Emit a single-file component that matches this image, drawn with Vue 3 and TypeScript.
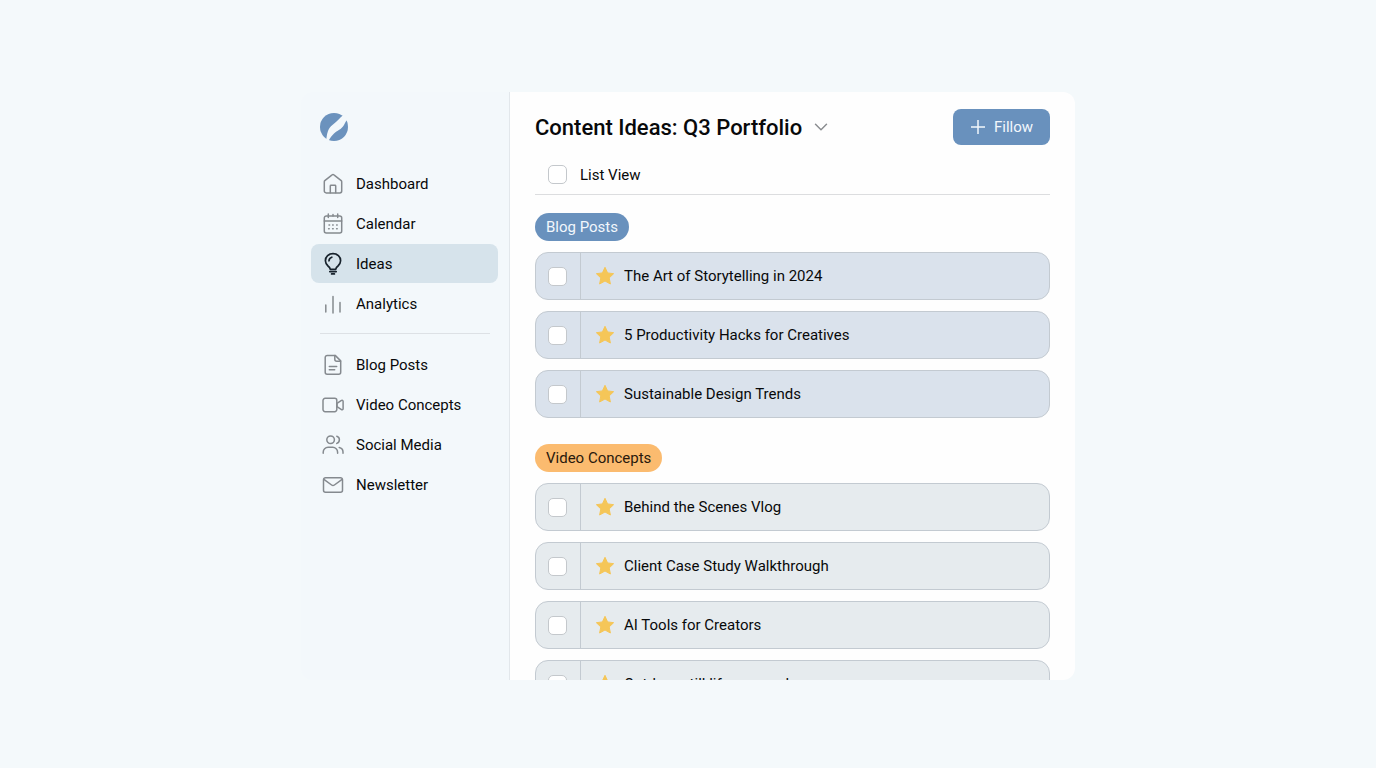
<script setup lang="ts">
import { ref } from 'vue'

interface NavItem {
  label: string
  icon: string
}

interface Idea {
  title: string
  done: boolean
}

interface Group {
  name: string
  tone: string
  ideas: Idea[]
}

const primary: NavItem[] = [
  { label: 'Dashboard', icon: 'home' },
  { label: 'Calendar', icon: 'calendar' },
  { label: 'Ideas', icon: 'bulb' },
  { label: 'Analytics', icon: 'bars' },
]

const secondary: NavItem[] = [
  { label: 'Blog Posts', icon: 'doc' },
  { label: 'Video Concepts', icon: 'video' },
  { label: 'Social Media', icon: 'people' },
  { label: 'Newsletter', icon: 'mail' },
]

const sections = [primary, secondary]

const icons: Record<string, string[]> = {
  home: [
    'M2.8 7.6 10.1 1.8a1.4 1.4 0 0 1 1.8 0l7.300 5.800a1.500 1.500 0 0 1 .5 1.200v9.200a1.900 1.900 0 0 1-1.900 1.900H4.200a1.900 1.900 0 0 1-1.900-1.900V8.800a1.500 1.500 0 0 1 .5-1.200Z',
    'M8.300 19.800v-6.800a.7.7 0 0 1 .7-.7h4a.7.7 0 0 1 .7.7v6.800',
  ],
  calendar: [
    'M4.3 2.900h13.400a2 2 0 0 1 2 2v13a2 2 0 0 1-2 2H4.300a2 2 0 0 1-2-2v-13a2 2 0 0 1 2-2Z',
    'M2.300 7.900h17.400M6.300.9v3.600M15.700.9v3.600M11 1.500v1.400',
    'M10.600 12h.6M14.600 12h.6M7 12h.6M6.600 15.800h.6M10.600 15.800h.6M14.600 15.800h.6',
  ],
  bulb: [
    'M8.300 16.300C8 14.800 7.300 14 6 13A7.200 7.200 0 0 1 3.400 7.800C3.400 3.700 6.700.7 11 .7s7.600 3 7.600 7.100A7.200 7.200 0 0 1 16 13c-1.300 1-2 1.800-2.300 3.300Z',
    'M7 7.800A4 4 0 0 1 9.800 4.200M7.800 18.600h6.400M9.600 20.900h2.800',
  ],
  bars: ['M3.800 12v7M11 3.500v16.500M18 9.500v9.500'],
  doc: [
    'M5.200 1.400h8l5.500 5.500v11.400a2 2 0 0 1-2 2H5.200a2 2 0 0 1-2-2V3.400a2 2 0 0 1 2-2Z',
    'M12.800 1.600v3.700a2 2 0 0 0 2 2h3.700M7.300 12.400h7.400M7.300 15.700h5.400',
  ],
  video: [
    'M3.100 4.300h9.600a2.100 2.100 0 0 1 2.100 2.100v9.200a2.100 2.100 0 0 1-2.100 2.100H3.100A2.100 2.100 0 0 1 1 15.600V6.400a2.100 2.100 0 0 1 2.100-2.100Z',
    'M15 9.300l4.500-2.900a1 1 0 0 1 1.600.8v7.600a1 1 0 0 1-1.600.8L15 12.700Z',
  ],
  people: [
    'M8.600 2a3.800 3.800 0 1 1 0 7.600 3.800 3.800 0 0 1 0-7.600Z',
    'M1.200 19.300v-1.100a4.900 4.900 0 0 1 4.900-4.900h4.600a4.900 4.900 0 0 1 4.900 4.900v1.100',
    'M14.800 2.200a3.800 3.800 0 0 1 0 7.200M17.200 13.500a4.700 4.700 0 0 1 3.800 4.600v1.200',
  ],
  mail: [
    'M3.500 3.700h15a2 2 0 0 1 2 2v10.600a2 2 0 0 1-2 2h-15a2 2 0 0 1-2-2V5.700a2 2 0 0 1 2-2Z',
    'M1.900 5.300l7.700 5.700a2.300 2.300 0 0 0 2.800 0l7.700-5.700',
  ],
}

const active = ref('Ideas')
const listView = ref(false)

const groups = ref<Group[]>([
  {
    name: 'Blog Posts',
    tone: 'blue',
    ideas: [
      { title: 'The Art of Storytelling in 2024', done: false },
      { title: '5 Productivity Hacks for Creatives', done: false },
      { title: 'Sustainable Design Trends', done: false },
    ],
  },
  {
    name: 'Video Concepts',
    tone: 'orange',
    ideas: [
      { title: 'Behind the Scenes Vlog', done: false },
      { title: 'Client Case Study Walkthrough', done: false },
      { title: 'AI Tools for Creators', done: false },
      { title: 'Outdoor still life as a reel', done: false },
    ],
  },
])
</script>

<template>
  <div class="page">
    <div class="window">
      <aside class="sidebar">
        <svg class="logo" viewBox="0 0 28 28" aria-label="Logo" role="img">
          <circle cx="14" cy="14" r="14" />
          <path
            class="quill"
            d="M5.500 29C7 25 6.500 21.500 8 18C10 13 13.500 11.500 16.500 8.500C19.500 5.500 21.500 3.500 24.500 1L29 5C26 7 25.500 9.500 24 12C21.500 16.500 17 17.500 14 20.500C11.500 23 9.500 25.500 8 29Z"
          />
        </svg>
        <nav class="nav">
          <ul v-for="(items, n) in sections" :key="n" class="nav-group">
            <li v-for="item in items" :key="item.label">
              <a
                href="#"
                class="nav-item"
                :class="{ active: active === item.label }"
                @click.prevent="active = item.label"
              >
                <svg class="icon" viewBox="0 0 22 22" aria-hidden="true">
                  <path v-for="d in icons[item.icon]" :key="d" :d="d" />
                </svg>
                <span>{{ item.label }}</span>
              </a>
            </li>
          </ul>
        </nav>
      </aside>

      <main class="main">
        <header class="header">
          <h1>Content Ideas: Q3 Portfolio</h1>
          <button class="chevron" type="button" aria-label="Switch board">
            <svg viewBox="0 0 14 14" aria-hidden="true"><path d="M1.500 4.300 7 9.800l5.500-5.500" /></svg>
          </button>
          <button class="add" type="button">
            <svg viewBox="0 0 14 14" aria-hidden="true"><path d="M7 0v14M0 7h14" /></svg>
            <span>Fillow</span>
          </button>
        </header>

        <label class="view-toggle">
          <input v-model="listView" type="checkbox" />
          <span>List View</span>
        </label>

        <section v-for="group in groups" :key="group.name" class="group" :class="group.tone">
          <h2>{{ group.name }}</h2>
          <ul class="ideas">
            <li v-for="idea in group.ideas" :key="idea.title">
              <label class="idea">
                <span class="check"><input v-model="idea.done" type="checkbox" /></span>
                <svg class="star" viewBox="0 0 20 20" aria-hidden="true">
                  <path
                    d="M10 1.300 12.600 6.900 18.600 7.700 14.200 11.900 15.400 18 10 15 4.600 18 5.800 11.900 1.400 7.700 7.400 6.900Z"
                  />
                </svg>
                <span>{{ idea.title }}</span>
              </label>
            </li>
          </ul>
        </section>
      </main>
    </div>
  </div>
</template>

<style>
body {
  margin: 0;
  background: #f4f9fb;
}
</style>

<style scoped>
.page {
  box-sizing: border-box;
  height: 100vh;
  padding: 92px 301px 88px;
  background: #f4f9fb;
  color: #08090a;
  font: 15px/20px Roboto, "Liberation Sans", sans-serif;
}

.window {
  display: flex;
  height: 100%;
  overflow: hidden;
  border-radius: 12px;
}

ul {
  margin: 0;
  padding: 0;
  list-style: none;
}

.sidebar {
  box-sizing: border-box;
  flex: 0 0 209px;
  padding: 21px 11px 0 10px;
  border-right: 1px solid #e2e7eb;
  background: #f3f8fb;
}

.logo {
  display: block;
  width: 28px;
  height: 28px;
  margin: 0 0 23px 9px;
}

.logo circle {
  fill: #6b92bd;
}

.logo .quill {
  fill: #f3f8fb;
}

.nav-group {
  display: grid;
  gap: 1px;
}

.nav-group + .nav-group {
  padding-top: 10px;
}

.nav-group + .nav-group::before {
  content: "";
  height: 1px;
  margin: 0 8px 10px 9px;
  background: #dde1e5;
}

.nav-item {
  display: flex;
  align-items: center;
  gap: 12px;
  height: 39px;
  padding-left: 11px;
  border-radius: 8px;
  color: inherit;
  text-decoration: none;
}

.nav-item.active {
  background: #d6e3eb;
}

.icon {
  width: 22px;
  height: 22px;
  overflow: visible;
  fill: none;
  stroke: #858a8f;
  stroke-width: 1.5;
  stroke-linecap: round;
  stroke-linejoin: round;
}

.active .icon {
  stroke: #17222c;
  stroke-width: 1.7;
}

.main {
  flex: 1;
  min-width: 0;
  overflow: hidden;
  padding: 17px 25px 0;
  background: #fefefe;
}

.header {
  display: flex;
  align-items: center;
}

h1 {
  margin: 0;
  font-size: 22px;
  font-weight: 500;
  line-height: 38px;
  height: 36px;
}

button {
  border: 0;
  font: inherit;
  cursor: pointer;
}

.chevron {
  display: flex;
  margin-left: 12px;
  padding: 0;
  background: none;
}

.chevron svg {
  width: 14px;
  height: 14px;
  fill: none;
  stroke: #8b8e91;
  stroke-width: 1.5;
  stroke-linecap: round;
}

.add {
  display: flex;
  align-items: center;
  gap: 9px;
  height: 36px;
  margin-left: auto;
  padding: 0 17px 0 18px;
  border-radius: 8px;
  background: #6991bd;
  color: #f2f7fc;
}

.add svg {
  width: 14px;
  height: 14px;
  fill: none;
  stroke: currentColor;
  stroke-width: 1.5;
}

.view-toggle {
  display: flex;
  align-items: center;
  gap: 13px;
  height: 39px;
  margin-top: 10px;
  padding-left: 13px;
  border-bottom: 1px solid #dcdddf;
}

input[type="checkbox"] {
  appearance: none;
  box-sizing: border-box;
  width: 19px;
  height: 19px;
  margin: 0;
  border: 1px solid #c4c8cc;
  border-radius: 5px;
  background: #fff;
}

input[type="checkbox"]:checked {
  background: #6991bd;
}

.group {
  padding-top: 18px;
}

.group + .group {
  padding-top: 26px;
}

h2 {
  width: fit-content;
  margin: 0 0 11px;
  padding: 0 11px;
  border-radius: 14px;
  font-size: 15px;
  font-weight: 400;
  line-height: 28px;
}

.blue h2 {
  background: #6991bd;
  color: #f2f7fc;
}

.orange h2 {
  background: #fbbb6f;
  color: #29190c;
}

.ideas {
  display: grid;
  gap: 11px;
}

.idea {
  display: flex;
  align-items: center;
  box-sizing: border-box;
  height: 48px;
  border: 1px solid #c3cad1;
  border-radius: 13px;
}

.blue .idea {
  background: #dae2ec;
}

.orange .idea {
  background: #e6ebee;
}

.check {
  display: flex;
  align-items: center;
  align-self: stretch;
  padding: 0 13px 0 12px;
  border-right: 1px solid #c3cad1;
}

.star {
  width: 20px;
  height: 20px;
  margin: 0 9px 0 14px;
  fill: #f5c658;
  stroke: #f5c658;
  stroke-linejoin: round;
}

@media (max-width: 1100px) {
  .page {
    padding-right: 24px;
    padding-left: 24px;
  }
}
</style>
